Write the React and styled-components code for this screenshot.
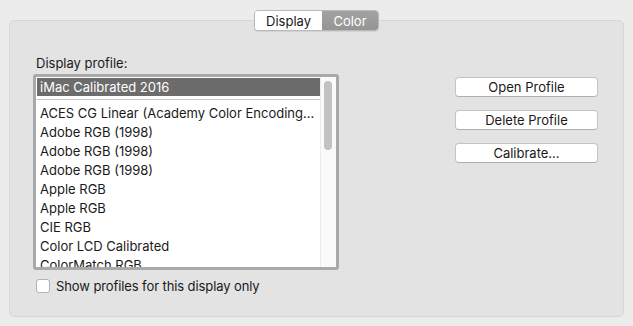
import React from 'react';
import styled, { createGlobalStyle } from 'styled-components';

const GlobalStyle = createGlobalStyle`
  html, body {
    margin: 0;
    padding: 0;
    background: #ececec;
  }
  body {
    font-family: Inter, "Noto Sans", "Liberation Sans", sans-serif;
    font-size: 13px;
    color: #1a1a1a;
  }
`;

const profiles = [
  'ACES CG Linear (Academy Color Encoding...',
  'Adobe RGB (1998)',
  'Adobe RGB (1998)',
  'Adobe RGB (1998)',
  'Apple RGB',
  'Apple RGB',
  'CIE RGB',
  'Color LCD Calibrated',
  'ColorMatch RGB',
];

function App() {
  return (
    <Window>
      <GlobalStyle />
      <Tabs>
        <Tab active>Display</Tab>
        <Tab>Color</Tab>
      </Tabs>
      <Panel>
        <LeftColumn>
          <Label>Display profile:</Label>
          <ListBox>
            <ListInner>
              <Rows>
                <Row selected>iMac Calibrated 2016</Row>
                <Separator />
                {profiles.map((p, i) => (
                  <Row key={i}>{p}</Row>
                ))}
              </Rows>
              <ScrollTrack>
                <ScrollThumb />
              </ScrollTrack>
            </ListInner>
          </ListBox>
          <CheckRow>
            <CheckBox />
            <CheckText>Show profiles for this display only</CheckText>
          </CheckRow>
        </LeftColumn>
        <RightColumn>
          <Button>Open Profile</Button>
          <Button>Delete Profile</Button>
          <Button>Calibrate...</Button>
        </RightColumn>
      </Panel>
    </Window>
  );
}

export default App;

const Window = styled.div`
  width: 633px;
  height: 326px;
  box-sizing: border-box;
  padding: 10px 9px 0;
  display: flex;
  flex-direction: column;
`;

const Tabs = styled.div`
  align-self: center;
  display: flex;
  height: 21px;
  margin-bottom: -11px;
  position: relative;
  z-index: 1;
  border: 1px solid #b9b9b9;
  border-radius: 4px;
  overflow: hidden;
  box-sizing: border-box;
  box-shadow: 0 1px 1px rgba(0, 0, 0, 0.08);
`;

const Tab = styled.div`
  display: flex;
  align-items: center;
  justify-content: center;
  width: ${p => (p.active ? '67px' : '56px')};
  box-sizing: border-box;
  font-size: 13px;
  background: ${p => (p.active ? '#ffffff' : 'linear-gradient(#a2a2a2, #959595)')};
  color: ${p => (p.active ? '#1a1a1a' : '#ffffff')};
`;

const Panel = styled.div`
  height: 297px;
  box-sizing: border-box;
  background: #e3e3e3;
  border: 1px solid #d6d6d6;
  border-radius: 5px;
  padding: 34px 25px 0 23px;
  display: flex;
  justify-content: space-between;
`;

const LeftColumn = styled.div`
  display: flex;
  flex-direction: column;
  width: 306px;
`;

const Label = styled.div`
  line-height: 16px;
  padding-left: 3px;
  margin-bottom: 3px;
`;

const ListBox = styled.div`
  height: 196px;
  box-sizing: border-box;
  border: 3px solid #a9a9a9;
  border-radius: 3px;
  background: #ffffff;
  overflow: hidden;
`;

const ListInner = styled.div`
  display: flex;
  height: 100%;
`;

const Rows = styled.div`
  flex: 1;
  padding: 1px 0 0 1px;
  overflow: hidden;
`;

const Row = styled.div`
  height: ${p => (p.selected ? '18px' : '19px')};
  line-height: ${p => (p.selected ? '18px' : '19px')};
  padding-left: 3px;
  white-space: nowrap;
  background: ${p => (p.selected ? '#6c6c6c' : 'transparent')};
  color: ${p => (p.selected ? '#ffffff' : '#1a1a1a')};
`;

const Separator = styled.div`
  height: 8px;
  display: flex;
  align-items: center;
  &::after {
    content: '';
    flex: 1;
    height: 1px;
    margin-top: -2px;
    background: #c8c8c8;
  }
`;

const ScrollTrack = styled.div`
  width: 16px;
  background: #fafafa;
  border-left: 1px solid #ececec;
  box-sizing: border-box;
  padding: 4px 0 0 3px;
`;

const ScrollThumb = styled.div`
  width: 8px;
  height: 69px;
  border-radius: 4px;
  background: #c2c2c2;
`;

const CheckRow = styled.div`
  display: flex;
  align-items: center;
  gap: 6px;
  margin-top: 8px;
  padding-left: 3px;
  line-height: 16px;
`;

const CheckText = styled.span`
  white-space: nowrap;
  letter-spacing: -0.1px;
`;

const CheckBox = styled.div`
  flex: none;
  width: 14px;
  height: 14px;
  box-sizing: border-box;
  background: #ffffff;
  border: 1px solid #b2b2b2;
  border-radius: 3px;
`;

const RightColumn = styled.div`
  display: flex;
  flex-direction: column;
  gap: 13px;
  padding-top: 22px;
`;

const Button = styled.div`
  width: 143px;
  height: 20px;
  box-sizing: border-box;
  display: flex;
  align-items: center;
  justify-content: center;
  background: #ffffff;
  border: 1px solid #c4c4c4;
  border-bottom-color: #b0b0b0;
  border-radius: 4px;
  font-size: 13px;
  color: #1a1a1a;
`;
